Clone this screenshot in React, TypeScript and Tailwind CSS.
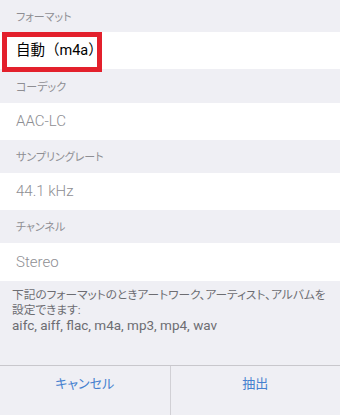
const JP = "font-['Roboto','Noto_Sans_CJK_JP',sans-serif] [font-feature-settings:'palt']"

function Header({ label, h }: { label: string; h: string }) {
  return (
    <div className={`${h} flex items-center pl-4 pt-1 text-[11px] text-[#8e8e93]`}>{label}</div>
  )
}

function Row({ value, dark, h }: { value: string; dark?: boolean; h: string }) {
  return (
    <div
      className={`${h} flex items-center bg-white pl-4 ${dark ? "text-[14.5px] text-black [font-feature-settings:normal]" : "text-[15px] font-light text-[#8e8e93]"}`}
    >
      {value}
    </div>
  )
}

export default function App() {
  return (
    <div className={`${JP} flex h-[415px] w-[340px] flex-col bg-[#efeff4]`}>
      <Header label="フォーマット" h="h-[32px]" />
      <div className="relative">
        <Row value="自動（m4a）" dark h="h-[37px]" />
        <div className="pointer-events-none absolute left-[2px] top-0 h-[40px] w-[100px] border-[5px] border-[#e3202c]" />
      </div>
      <Header label="コーデック" h="h-[34px]" />
      <Row value="AAC-LC" h="h-[37px]" />
      <Header label="サンプリングレート" h="h-[33px]" />
      <Row value="44.1 kHz" h="h-[37px]" />
      <Header label="チャンネル" h="h-[33px]" />
      <Row value="Stereo" h="h-[38px]" />
      <div className="flex-1 px-3 pt-[7px] text-[11.7px] leading-[15px] text-[#6d6d72]">
        <div>下記のフォーマットのときアートワーク、アーティスト、アルバムを</div>
        <div>設定できます:</div>
        <div className="text-[13.5px]">aifc, aiff, flac, m4a, mp3, mp4, wav</div>
      </div>
      <div className="flex h-[50px] border-t border-[#c8c7cc] text-[13px] text-[#4580cf]">
        <button className="flex flex-1 items-center justify-center pb-[13px]">キャンセル</button>
        <div className="w-px bg-[#d1d0d5]" />
        <button className="flex flex-1 items-center justify-center pb-[13px]">抽出</button>
      </div>
    </div>
  )
}
